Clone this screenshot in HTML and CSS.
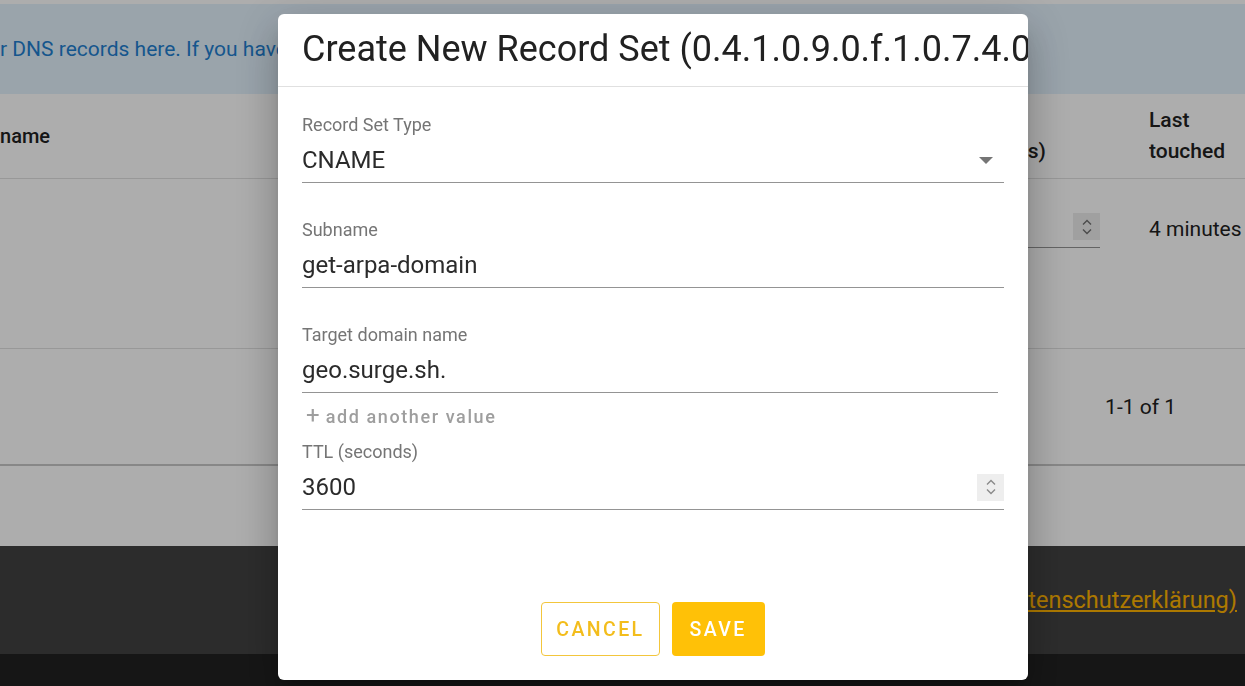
FILE: index.html
```html
<!DOCTYPE html>
<html lang="en">
<head>
    <meta charset="UTF-8">
    <meta name="viewport" content="width=device-width, initial-scale=1.0">
    <title>DNS Records</title>
    <link rel="stylesheet" href="styles.css">
</head>
<body>
    <div class="page">
        <div class="topbar"></div>

        <div class="banner">
            <span>r DNS records here. If you have</span>
        </div>

        <div class="table">
            <div class="row head-row">
                <div class="cell cell-name">name</div>
                <div class="cell cell-ttl">TTL<br>(seconds)</div>
                <div class="cell cell-touched">Last<br>touched</div>
            </div>
            <div class="row data-row">
                <div class="cell cell-name"></div>
                <div class="cell cell-ttl">
                    <div class="mini-input">
                        <span class="mini-value">3600</span>
                        <span class="spin spin-dim">
                            <svg width="14" height="20" viewBox="0 0 14 20"><path d="M3 7.5 L7 3.5 L11 7.5 M3 12.5 L7 16.5 L11 12.5" fill="none" stroke="#6f6f6f" stroke-width="1.4"/></svg>
                        </span>
                    </div>
                </div>
                <div class="cell cell-touched">4 minutes</div>
            </div>
            <div class="row pager-row">
                <div class="pager">1-1 of 1</div>
            </div>
        </div>

        <div class="spacer"></div>

        <footer class="footer">
            <a href="#" class="footer-link">(Datenschutzerklärung)</a>
        </footer>
        <div class="bottombar"></div>
    </div>

    <div class="scrim"></div>

    <div class="dialog">
        <div class="dialog-title">Create New Record Set (0.4.1.0.9.0.f.1.0.7.4.0.1.0.0.2.ip6.arpa)</div>
        <div class="dialog-body">
            <div class="field">
                <label class="field-label">Record Set Type</label>
                <div class="field-input">
                    <span class="field-value">CNAME</span>
                    <span class="caret"></span>
                </div>
            </div>
            <div class="field">
                <label class="field-label">Subname</label>
                <div class="field-input">
                    <span class="field-value">get-arpa-domain</span>
                </div>
            </div>
            <div class="field field-short">
                <label class="field-label">Target domain name</label>
                <div class="field-input">
                    <span class="field-value">geo.surge.sh.</span>
                </div>
            </div>
            <div class="add-value"><span class="plus">+</span>add another value</div>
            <div class="field">
                <label class="field-label">TTL (seconds)</label>
                <div class="field-input">
                    <span class="field-value">3600</span>
                    <span class="spin">
                        <svg width="14" height="20" viewBox="0 0 14 20"><path d="M3 7.5 L7 3.5 L11 7.5 M3 12.5 L7 16.5 L11 12.5" fill="none" stroke="#8a8a8a" stroke-width="1.4"/></svg>
                    </span>
                </div>
            </div>
        </div>
        <div class="dialog-actions">
            <button class="btn btn-outline">Cancel</button>
            <button class="btn btn-solid">Save</button>
        </div>
    </div>
</body>
</html>
```

FILE: styles.css
```css
:root {
    --amber: #ffc107;
    --text: #212121;
    --label: #757575;
    --line: #949494;
}

* {
    box-sizing: border-box;
}

body {
    margin: 0;
    font-family: Roboto, "Liberation Sans", sans-serif;
    color: var(--text);
    background: #fff;
    overflow: hidden;
}

.page {
    display: flex;
    flex-direction: column;
    height: 686px;
    width: 1245px;
}

.topbar {
    height: 4px;
    background: #fff;
}

.banner {
    height: 90px;
    background: #e3f2fd;
    color: #1f7fd0;
    font-size: 21px;
    display: flex;
    align-items: center;
    white-space: nowrap;
    overflow: hidden;
}

.table {
    display: flex;
    flex-direction: column;
}

.row {
    display: flex;
    border-bottom: 1px solid #e0e0e0;
}

.cell {
    font-size: 21px;
}

.head-row {
    height: 85px;
    align-items: center;
    font-weight: 500;
    line-height: 31px;
}

.head-row .cell-name {
    font-size: 20px;
}

.cell-name {
    width: 952px;
}

.cell-ttl {
    width: 197px;
}

.cell-touched {
    flex: 1;
    white-space: nowrap;
    overflow: hidden;
}

.data-row {
    height: 170px;
    align-items: flex-start;
    padding-top: 36px;
    line-height: 28px;
}

.mini-input {
    width: 148px;
    height: 33px;
    display: flex;
    align-items: flex-start;
    justify-content: space-between;
    border-bottom: 1px solid var(--line);
}

.mini-value {
    visibility: hidden;
}

.spin {
    width: 27px;
    height: 27px;
    background: #eeeeee;
    display: flex;
    align-items: center;
    justify-content: center;
}

.spin-dim {
    background: #ececec;
    margin-top: -2px;
}

.pager-row {
    height: 117px;
    align-items: center;
    justify-content: flex-end;
    padding-right: 69px;
    border-bottom: 2px solid #c8c8c8;
}

.pager {
    font-size: 21px;
}

.spacer {
    height: 80px;
}

.footer {
    height: 108px;
    background: #424242;
    display: flex;
    align-items: center;
    justify-content: flex-end;
    padding-right: 8px;
}

.footer-link {
    color: #ffb300;
    font-size: 23.5px;
}

.bottombar {
    flex: 1;
    background: #212121;
}

.scrim {
    position: fixed;
    inset: 0;
    background: rgba(0, 0, 0, 0.32);
}

/* dialog */

.dialog {
    position: fixed;
    left: 278px;
    top: 14px;
    width: 750px;
    height: 666px;
    background: #fff;
    border-radius: 6px;
    display: flex;
    flex-direction: column;
    box-shadow: 0 11px 15px -7px rgba(0, 0, 0, 0.2), 0 24px 38px 3px rgba(0, 0, 0, 0.14), 0 9px 46px 8px rgba(0, 0, 0, 0.12);
}

.dialog-title {
    height: 73px;
    padding: 0 0 0 24px;
    font-size: 36px;
    line-height: 70px;
    white-space: nowrap;
    overflow: hidden;
    border-bottom: 1px solid #e0e0e0;
    color: var(--text);
}

.dialog-body {
    padding: 28px 24px 0;
}

.field {
    display: flex;
    flex-direction: column;
    margin-bottom: 37px;
}

.field-label {
    font-size: 18px;
    line-height: 20px;
    color: var(--label);
}

.field-input {
    margin-top: 9px;
    height: 39px;
    padding-bottom: 6px;
    border-bottom: 1px solid var(--line);
    display: flex;
    align-items: center;
    justify-content: space-between;
}

.field-value {
    font-size: 24px;
    line-height: 32px;
    color: #2b2b2b;
}

.field-short {
    margin-right: 6px;
    margin-bottom: 11px;
}

.caret {
    width: 0;
    height: 0;
    border-left: 7.5px solid transparent;
    border-right: 7.5px solid transparent;
    border-top: 7px solid #757575;
    margin-right: 11px;
}

.add-value {
    font-size: 18px;
    line-height: 22px;
    font-weight: 500;
    letter-spacing: 1.6px;
    color: #9e9e9e;
    padding-left: 4px;
    margin-bottom: 14px;
}

.plus {
    font-size: 24px;
    font-weight: 400;
    margin-right: 6px;
    letter-spacing: 0;
}

.dialog-actions {
    margin-top: auto;
    display: flex;
    justify-content: center;
    gap: 12px;
    padding-bottom: 24px;
}

.btn {
    height: 54px;
    font-family: Roboto, "Liberation Sans", sans-serif;
    font-size: 19.5px;
    font-weight: 500;
    letter-spacing: 2.4px;
    text-transform: uppercase;
    border-radius: 4px;
    padding: 0 14px;
    cursor: pointer;
}

.btn-outline {
    background: #fff;
    color: #f3bd1c;
    border: 1px solid #f3c63c;
}

.btn-solid {
    background: var(--amber);
    color: #fff;
    border: none;
    padding: 0 18px;
}
```
